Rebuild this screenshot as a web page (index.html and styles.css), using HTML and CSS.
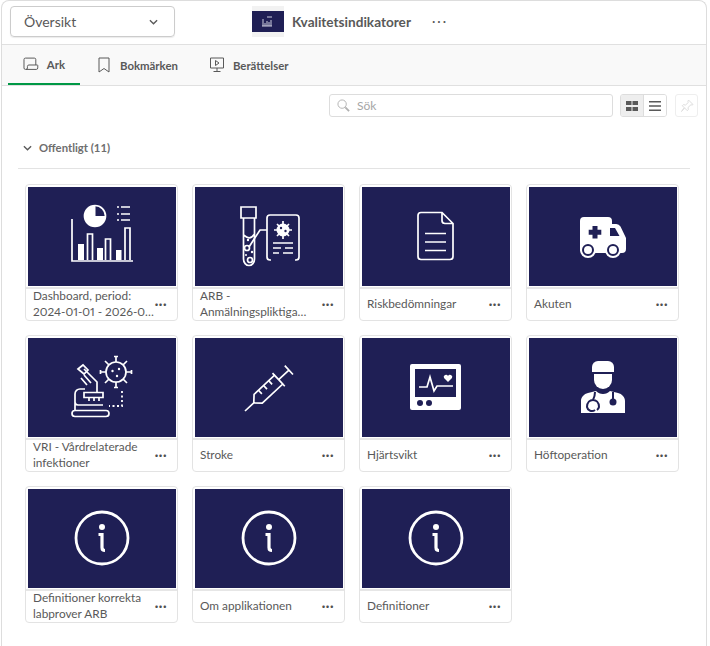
FILE: index.html
```html
<!DOCTYPE html>
<html lang="sv">
<head>
    <meta charset="UTF-8">
    <title>Kvalitetsindikatorer</title>
    <link rel="stylesheet" href="styles.css">
</head>
<body>
    <div class="frame">
        <header class="topbar">
            <div class="select">
                <span>Översikt</span>
                <svg class="chev" viewBox="0 0 10 6"><path d="M1 1l4 4 4-4"/></svg>
            </div>
            <div class="app">
                <div class="app-logo">
                    <svg viewBox="0 0 32 21"><path class="thin" d="M11 15V8M20 15h-10M13 15v-3M15 15v-5M17 15v-4M19 15v-6M15 6h5"/></svg>
                </div>
                <span class="app-name">Kvalitetsindikatorer</span>
                <span class="app-more">···</span>
            </div>
        </header>

        <nav class="tabs">
            <a class="tab active">
                <svg class="tab-ico" viewBox="0 0 16 14"><path d="M3 12.5H2.5A1.5 1.5 0 0 1 1 11V2.5A1.5 1.5 0 0 1 2.5 1h9A1.5 1.5 0 0 1 13 2.500V8M3 12.500a1.500 1.500 0 0 0 1.500-1.500V9.500A1.500 1.500 0 0 1 6 8h8.500a.5.5 0 0 1 .5.5V11a1.500 1.500 0 0 1-1.500 1.500z"/></svg>
                Ark
            </a>
            <a class="tab">
                <svg class="tab-ico" viewBox="0 0 12 16"><path d="M1 1h10v14l-5-3.500L1 15z"/></svg>
                Bokmärken
            </a>
            <a class="tab">
                <svg class="tab-ico" viewBox="0 0 16 16"><path d="M1.500 1h13v10h-13zM8 11v3M4.500 14.500h7M6.500 3.500v5l3.500-2.500z"/></svg>
                Berättelser
            </a>
        </nav>

        <div class="tools">
            <div class="search">
                <svg class="search-ico" viewBox="0 0 14 14"><circle cx="5.500" cy="5.500" r="4.500"/><path d="M9 9l4 4" stroke-width="2"/></svg>
                <span>Sök</span>
            </div>
            <div class="toggle">
                <button class="toggle-btn on">
                    <svg viewBox="0 0 12 10"><path d="M0 0h5.500v4H0zM6.500 0H12v4H6.500zM0 6h5.500v4H0zM6.500 6H12v4H6.500z"/></svg>
                </button>
                <button class="toggle-btn">
                    <svg viewBox="0 0 12 10"><path d="M0 0h12v1.500H0zM0 4.200h12v1.500H0zM0 8.500h12V10H0z"/></svg>
                </button>
            </div>
            <button class="pin">
                <svg viewBox="0 0 14 14"><path d="M8.500 1l4.500 4.500-1 .6-1-.4L8 8.500l.3 2.200-1 1-2.800-2.800L1.500 12.500l2.800-3.700L2.300 6.700l1-1 2.200.3 2.800-2.500-.4-1z"/></svg>
            </button>
        </div>

        <section class="group">
            <div class="group-head">
                <svg class="chev" viewBox="0 0 10 6"><path d="M1 1l4 4 4-4"/></svg>
                <span>Offentligt (11)</span>
            </div>

            <div class="grid">
                <div class="card">
                    <svg class="thumb" viewBox="0 0 148 99">
                        <path class="line" d="M44 32v42h61"/>
                        <path class="solid" d="M50 57h6v16h-6zM69 61h6v12h-6zM88 63h5.500v10H88z"/>
                        <path class="line" d="M59.500 73V47h5v26M77.500 73V52h5v21M97 73V41h5v32"/>
                        <circle class="line" cx="67" cy="29" r="10.500"/>
                        <path class="solid" d="M67 18.500A10.500 10.500 0 1 0 77.500 29H67z"/>
                        <path class="solid" d="M67 29h10.500v1.500H67zM66 18.500h1.500V29H66z"/>
                        <path class="line" d="M89 20h2M93 20h9M89 27h2M93 27h9M89 33h2M93 33h9"/>
                    </svg>
                    <div class="caption">
                        <span class="label nowrap">Dashboard, period:<br>2024-01-01 - 2026-0…</span>
                        <span class="more">···</span>
                    </div>
                </div>

                <div class="card">
                    <svg class="thumb" viewBox="0 0 148 99">
                        <path class="line" d="M46 20h15v11H46zM48.500 31v41a5.500 6.500 0 0 0 11 0V31M48.500 48c4 3 7 5 11-1"/>
                        <circle class="line" cx="52" cy="61" r="2.500"/>
                        <circle class="line" cx="55" cy="73" r="2.500"/>
                        <circle class="solid" cx="53" cy="53" r="1.200"/>
                        <circle class="solid" cx="57" cy="65" r="1.200"/>
                        <circle class="solid" cx="51" cy="68" r="1"/>
                        <path class="line" d="M54 60l11-17h7"/>
                        <path class="line" d="M76 73h-1a3 3 0 0 1-3-3V31a3 3 0 0 1 3-3h26a3 3 0 0 1 3 3v39a3 3 0 0 1-3 3h-1"/>
                        <circle class="solid" cx="88" cy="43" r="6.500"/>
                        <path class="line" d="M88 34v18M79 43h18M82 37l12 12M94 37L82 49"/>
                        <circle class="dark" cx="86" cy="41" r="1.200"/>
                        <circle class="dark" cx="90.500" cy="44" r="1.200"/>
                        <path class="line" d="M78 56h20M78 61h8M90 61h8M78 66h6M88 66h10"/>
                    </svg>
                    <div class="caption">
                        <span class="label">ARB - Anmälningspliktiga…</span>
                        <span class="more">···</span>
                    </div>
                </div>

                <div class="card">
                    <svg class="thumb" viewBox="0 0 148 99">
                        <path class="line" d="M80 25.500H59a3 3 0 0 0-3 3v41a3 3 0 0 0 3 3h29a3 3 0 0 0 3-3V36.500zM80 25.500v8a3 3 0 0 0 3 3h8"/>
                        <path class="line" d="M63 46.500h21M63 55h21M63 63.500h21"/>
                    </svg>
                    <div class="caption">
                        <span class="label">Riskbedömningar</span>
                        <span class="more">···</span>
                    </div>
                </div>

                <div class="card">
                    <svg class="thumb" viewBox="0 0 148 99">
                        <path class="solid" d="M55 30h24a4 4 0 0 1 4 4v3h4a5 5 0 0 1 4.500 2.500L97 51v11a4 4 0 0 1-4 4H55a4 4 0 0 1-4-4V34a4 4 0 0 1 4-4z"/>
                        <path class="dark" d="M63.500 39h5v3.800h3.800v5h-3.800v3.800h-5v-3.800h-3.800v-5h3.800z"/>
                        <path class="dark" d="M81 41h5l4.500 8H81z"/>
                        <circle class="solid" cx="59" cy="63" r="8"/>
                        <circle class="solid" cx="84" cy="63" r="8"/>
                        <circle class="wheel" cx="59" cy="63" r="5"/>
                        <circle class="wheel" cx="84" cy="63" r="5"/>
                    </svg>
                    <div class="caption">
                        <span class="label">Akuten</span>
                        <span class="more">···</span>
                    </div>
                </div>

                <div class="card">
                    <svg class="thumb" viewBox="0 0 148 99">
                        <rect class="line" x="44" y="72.500" width="37" height="6" rx="3"/>
                        <path class="line" d="M47 72.500V56a5 5 0 0 1 5-5h5M47 64c0 2 1 3 3 3h25"/>
                        <path class="line" d="M50 31l5-4 5 5-4 4zM56 31l13 13v10M56 37l7 8M53 40l6 7"/>
                        <path class="line" d="M56 54.500h19v5H56zM61 60v3M66 60v3M71 60v3"/>
                        <circle class="line" cx="88" cy="34" r="10"/>
                        <path class="line" d="M88 24v-5M88 44v5M78 34h-5M98 34h5M81 27l-4-4M95 27l4-4M81 41l-4 4M95 41l4 4M86 18.500h4M86 49.500h4M72.500 32v4M103.500 32v4"/>
                        <circle class="solid" cx="84.500" cy="33" r="1.200"/>
                        <circle class="solid" cx="91" cy="31" r="1.200"/>
                        <circle class="solid" cx="89" cy="38" r="1.200"/>
                        <path class="dots" d="M94 53v15H81"/>
                    </svg>
                    <div class="caption">
                        <span class="label">VRI - Vårdrelaterade infektioner</span>
                        <span class="more">···</span>
                    </div>
                </div>

                <div class="card">
                    <svg class="thumb" viewBox="0 0 148 99">
                        <g transform="translate(50 73) rotate(-43)">
                            <path class="line" d="M0 0h12M12 0l6-6h28v12H18zM46-9V9M46 0h14M60-6V6"/>
                            <path class="line" d="M24-6v5M31-6v5M38-6v5"/>
                        </g>
                    </svg>
                    <div class="caption">
                        <span class="label">Stroke</span>
                        <span class="more">···</span>
                    </div>
                </div>

                <div class="card">
                    <svg class="thumb" viewBox="0 0 148 99">
                        <rect class="solid" x="48" y="26" width="51" height="46" rx="2"/>
                        <rect class="dark" x="53" y="31" width="41" height="28"/>
                        <path class="line" d="M57 49h8l3-10 4 14 3-5h16"/>
                        <path class="solid" d="M86 44l-4-4a2.200 2.200 0 0 1 4-2 2.200 2.200 0 0 1 4 2z"/>
                        <circle class="dark" cx="58" cy="65" r="3"/>
                        <circle class="dark" cx="67" cy="65" r="3"/>
                    </svg>
                    <div class="caption">
                        <span class="label">Hjärtsvikt</span>
                        <span class="more">···</span>
                    </div>
                </div>

                <div class="card">
                    <svg class="thumb" viewBox="0 0 148 99">
                        <path class="solid" d="M63 34v-5a6 6 0 0 1 6-6h10a6 6 0 0 1 6 6v5z"/>
                        <path class="solid" d="M65 36h18v6a9 9 0 0 1-18 0z"/>
                        <path class="solid" d="M59 55l8-2c2 2 4 3 7 3s5-1 7-3l8 2c4 1 7 4 7 8v12H52V63c0-4 3-7 7-8z"/>
                        <path class="steth" d="M66 54c0 4-1 6-2 8M66 72a5 5 0 0 1-8-3c0-5 3-7 6-7s6 2 6 7a5 5 0 0 1-2 3"/>
                        <path class="steth" d="M84 54v7"/>
                        <circle class="dark" cx="84" cy="64" r="3.500"/>
                    </svg>
                    <div class="caption">
                        <span class="label">Höftoperation</span>
                        <span class="more">···</span>
                    </div>
                </div>

                <div class="card">
                    <svg class="thumb" viewBox="0 0 148 99">
                        <circle class="ring" cx="74" cy="49" r="26"/>
                        <circle class="solid" cx="74" cy="38" r="3"/>
                        <path class="stem" d="M70.500 45.500H74v13c0 2 1 3 3 3"/>
                    </svg>
                    <div class="caption">
                        <span class="label">Definitioner korrekta labprover ARB</span>
                        <span class="more">···</span>
                    </div>
                </div>

                <div class="card">
                    <svg class="thumb" viewBox="0 0 148 99">
                        <circle class="ring" cx="74" cy="49" r="26"/>
                        <circle class="solid" cx="74" cy="38" r="3"/>
                        <path class="stem" d="M70.500 45.500H74v13c0 2 1 3 3 3"/>
                    </svg>
                    <div class="caption">
                        <span class="label">Om applikationen</span>
                        <span class="more">···</span>
                    </div>
                </div>

                <div class="card">
                    <svg class="thumb" viewBox="0 0 148 99">
                        <circle class="ring" cx="74" cy="49" r="26"/>
                        <circle class="solid" cx="74" cy="38" r="3"/>
                        <path class="stem" d="M70.500 45.500H74v13c0 2 1 3 3 3"/>
                    </svg>
                    <div class="caption">
                        <span class="label">Definitioner</span>
                        <span class="more">···</span>
                    </div>
                </div>
            </div>
        </section>
    </div>
</body>
</html>
```

FILE: styles.css
```css
* {
    margin: 0;
    padding: 0;
    box-sizing: border-box;
}

body {
    font-family: Lato, "Noto Sans", sans-serif;
    font-size: 12px;
    color: #595959;
    background: #fff;
    overflow: hidden;
}

.frame {
    width: 706px;
    height: 646px;
    margin-left: 1px;
    border: 1px solid #ddd;
    border-bottom: none;
    border-radius: 8px 8px 0 0;
}

.topbar {
    height: 44px;
    display: flex;
    align-items: center;
    padding: 0 0 2px 8px;
    border-bottom: 1px solid #e0e0e0;
}

.select {
    width: 165px;
    height: 31px;
    display: flex;
    align-items: center;
    justify-content: space-between;
    padding: 0 16px 0 13px;
    border: 1px solid #ccc;
    border-radius: 4px;
    box-shadow: 0 1px 1px rgba(0, 0, 0, 0.08);
    font-size: 14px;
}

.chev {
    width: 9px;
    height: 6px;
    fill: none;
    stroke: #595959;
    stroke-width: 1.5;
}

.app {
    display: flex;
    align-items: center;
    margin-left: 77px;
}

.app-logo {
    width: 32px;
    height: 31px;
    padding: 5px 0;
    background: #f2f2f2;
}

.app-logo svg {
    display: block;
    width: 32px;
    height: 21px;
    background: #1f1f55;
}

.thin {
    fill: none;
    stroke: #cfd0e0;
    stroke-width: 1;
}

.app-name {
    margin-left: 8px;
    font-size: 13.600px;
    font-weight: 700;
}

.app-more {
    margin-left: 21px;
    font-size: 13px;
    letter-spacing: 2px;
    line-height: 1;
}

.tabs {
    height: 41px;
    display: flex;
    padding-left: 6px;
    background: #f9f9f9;
    border-bottom: 1px solid #e0e0e0;
}

.tab {
    display: flex;
    align-items: center;
    gap: 8px;
    height: 40px;
    padding: 0 15px;
    font-size: 11.400px;
    font-weight: 700;
}

.tab.active {
    width: 72px;
    border-bottom: 2px solid #009845;
}

.tab + .tab {
    margin-left: 1px;
}

.tab-ico {
    width: 16px;
    height: 16px;
    fill: none;
    stroke: #595959;
    stroke-width: 1;
}

.tools {
    height: 23px;
    display: flex;
    justify-content: flex-end;
    margin-top: 8px;
    padding-right: 8px;
}

.search {
    width: 284px;
    display: flex;
    align-items: center;
    gap: 7px;
    padding-left: 7px;
    border: 1px solid #ddd;
    border-radius: 3px;
    color: #a6a6a6;
    font-size: 12px;
}

.search-ico {
    width: 13px;
    height: 13px;
    fill: none;
    stroke: #b0b0b0;
    stroke-width: 1;
}

.toggle {
    display: flex;
    margin-left: 7px;
    border: 1px solid #ddd;
    border-radius: 3px;
    overflow: hidden;
}

.toggle-btn {
    width: 22px;
    display: flex;
    align-items: center;
    justify-content: center;
    border: none;
    background: #fff;
}

.toggle-btn.on {
    width: 23px;
    background: #eee;
    border-right: 1px solid #ddd;
}

.toggle-btn svg {
    width: 12px;
    height: 10px;
    fill: #595959;
}

.pin {
    width: 23px;
    display: flex;
    align-items: center;
    justify-content: center;
    margin-left: 8px;
    background: #fff;
    border: 1px solid #eee;
    border-radius: 3px;
}

.pin svg {
    width: 14px;
    height: 14px;
    fill: none;
    stroke: #dedede;
    stroke-width: 1;
}

.group {
    padding: 0 16px 0 16px;
}

.group-head {
    height: 52px;
    display: flex;
    align-items: center;
    gap: 7px;
    padding: 10px 0 0 5px;
    border-bottom: 1px solid #e3e3e3;
    font-size: 11.300px;
    font-weight: 700;
    color: #6e6e6e;
}

.grid {
    display: grid;
    grid-template-columns: repeat(4, 153px);
    gap: 14px;
    padding: 15px 0 0 7px;
}

.card {
    height: 137px;
    display: flex;
    flex-direction: column;
    border: 1px solid #e3e3e3;
    border-radius: 4px;
    padding-top: 2px;
}

.thumb {
    display: block;
    flex: none;
    width: 148px;
    height: 99px;
    margin-left: 2px;
    background: #1f1f55;
}

.caption {
    flex: 1;
    display: flex;
    align-items: center;
    margin-top: 1px;
    padding: 0 10px 2px 7px;
    border-top: 2px solid #e6e6e6;
    min-height: 0;
}

.label {
    flex: 1;
    min-width: 0;
    font-size: 11.800px;
    line-height: 16px;
    padding-right: 2px;
    font-variant-numeric: proportional-nums;
}

.label.nowrap {
    white-space: nowrap;
}

.more {
    font-size: 13px;
    font-weight: 700;
    letter-spacing: 0.5px;
    color: #505050;
}

/* thumbnail drawing */
.line {
    fill: none;
    stroke: #fff;
    stroke-width: 1.700;
}

.solid {
    fill: #fff;
}

.dark {
    fill: #1f1f55;
}

.wheel {
    fill: #fff;
    stroke: #1f1f55;
    stroke-width: 2;
}

.dots {
    fill: none;
    stroke: #fff;
    stroke-width: 1.800;
    stroke-dasharray: 2 2.500;
}

.steth {
    fill: none;
    stroke: #1f1f55;
    stroke-width: 2;
}

.ring {
    fill: none;
    stroke: #fff;
    stroke-width: 2.800;
}

.stem {
    fill: none;
    stroke: #fff;
    stroke-width: 3.200;
}
```
